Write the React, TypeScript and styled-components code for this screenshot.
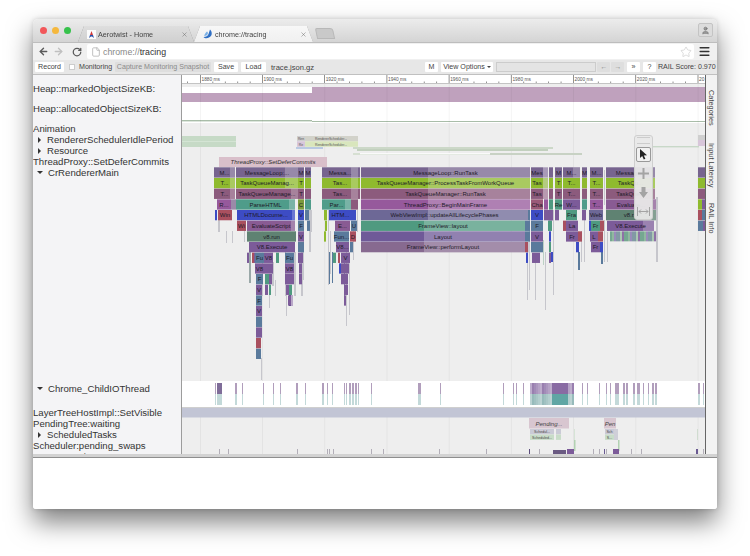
import React from "react";
import styled, { createGlobalStyle } from "styled-components";
import { ArrowLeft, ArrowRight, RotateCw, Star, Menu, File, User, X } from "lucide-react";

const Global = createGlobalStyle`
  html, body { margin: 0; padding: 0; background: #fff; }
  body { font-family: "Liberation Sans", Arial, sans-serif; color: #222; }
`;

const Page = styled.div`
  width: 750px; height: 556px; padding: 19px 0 0 33px; box-sizing: border-box; overflow: hidden;
`;
const Window = styled.div`
  width: 684px; height: 490px; border-radius: 5px 5px 3px 3px; background: #fff; overflow: hidden;
  box-shadow: 0 13px 26px rgba(0,0,0,.5), 0 0 5px rgba(0,0,0,.16);
  display: flex; flex-direction: column;
`;
const Soft = styled.div`
  filter: blur(.45px); display: flex; flex-direction: column; flex: 1; min-height: 0;
`;
const TabStrip = styled.div`
  height: 23px; display: flex; align-items: flex-end; flex: none; position: relative;
  background: linear-gradient(#ececec, #d4d4d4); padding-left: 7px;
`;
const Lights = styled.div`
  display: flex; gap: 5px; align-self: flex-start; margin-top: 8px; width: 38px; flex: none;
`;
const Light = styled.span<{ $c: string }>`
  width: 7px; height: 7px; border-radius: 50%; background: ${p => p.$c};
`;
const TabWrap = styled.div<{ $w: number; $active?: boolean }>`
  width: ${p => p.$w}px; height: 16px; flex: none; filter: drop-shadow(0 0 .6px #8a8a8a);
  & > div { background: ${p => p.$active ? "linear-gradient(#f7f7f7,#f0f0f0)" : "linear-gradient(#dedede,#d0d0d0)"}; }
`;
const TabBody = styled.div`
  height: 100%; display: flex; align-items: center; padding: 0 6px 0 9px; gap: 2px; font-size: 7.2px; color: #444;
  clip-path: polygon(6px 0, calc(100% - 6px) 0, 100% 100%, 0 100%);
`;
const TabTitle = styled.span` flex: 1; white-space: nowrap; `;
const NewTab = styled.div`
  width: 16px; height: 9px; margin: 0 0 3px 3px; background: #c9c9c9; border: 1px solid #b8b8b8; border-radius: 2px 3px 0 0; transform: skewX(12deg);
`;
const Profile = styled.div`
  position: absolute; right: 4px; top: 4px; width: 15px; height: 14px; border: 1px solid #c4c4c4; border-radius: 2px;
  display: flex; align-items: center; justify-content: center; box-sizing: border-box; background: #dcdcdc;
`;
const AddressBar = styled.div`
  height: 18px; flex: none; display: flex; align-items: center; background: #f0f0f0; border-top: 1px solid #bdbdbd;
  box-sizing: border-box; padding-left: 4px;
`;
const NavIcon = styled.span<{ $w: number }>`
  width: ${p => p.$w}px; display: flex; justify-content: center; align-items: center; flex: none;
`;
const Omnibox = styled.div`
  width: 607px; height: 15px; margin-left: 1px; background: #fff; border-radius: 2px; display: flex; align-items: center;
  padding: 0 2px 0 4px; box-sizing: border-box; font-size: 8.8px; color: #888; flex: none;
`;
const Url = styled.span` margin-left: 2px; flex: 1; b { font-weight: 400; color: #333; } `;
const Burger = styled.span` margin-left: 4px; display: flex; `;
const Toolbar = styled.div`
  height: 15px; flex: none; display: flex; align-items: center; background: #e7e7e7; padding-left: 2px;
  font-size: 7.1px; color: #444; border-bottom: 1px solid #c0c0c0; box-sizing: border-box;
`;
const Btn = styled.div<{ $w: number; $ml?: number; $muted?: boolean }>`
  width: ${p => p.$w}px; margin-left: ${p => p.$ml ?? 0}px; height: 10px; flex: none; display: flex; align-items: center; justify-content: center;
  background: ${p => p.$muted ? "#dedede" : "#fff"}; color: ${p => p.$muted ? "#8a8a8a" : "#444"}; border-radius: 1px; white-space: nowrap;
`;
const Check = styled.span`
  width: 6px; height: 6px; margin-left: 5px; background: #fff; border: 1px solid #ccc; flex: none; box-sizing: border-box;
`;
const Plain = styled.span<{ $ml: number; $w: number; $size?: number }>`
  margin-left: ${p => p.$ml}px; width: ${p => p.$w}px; flex: none; white-space: nowrap; font-size: ${p => p.$size ?? 7.1}px;
`;
const Caret = styled.i`
  display: inline-block; border: 2px solid transparent; border-top-color: #444; border-bottom: 0; margin-left: 2px;
`;
const SearchInput = styled.div`
  width: 100px; height: 10px; margin-left: 3px; background: #e4e4e4; border: 1px solid #ccc; box-sizing: border-box; flex: none;
`;
const Content = styled.div` height: 379px; display: flex; flex: none; overflow: hidden; `;
const Labels = styled.div`
  width: 149px; flex: none; background: #f4f4f6; border-right: 1px solid #9c9c9c; box-sizing: border-box; padding-top: 8px;
  overflow: hidden; display: flex; flex-direction: column; font-size: 9.6px; line-height: 11px; color: #333;
`;
const Label = styled.div<{ $gap?: number; $indent?: number }>`
  height: 11px; flex: none; white-space: nowrap; margin-top: ${p => p.$gap ?? 0}px; padding-left: ${p => p.$indent ?? 0}px;
  display: flex; align-items: center;
`;
const Tri = styled.i<{ $open?: boolean }>`
  display: inline-block; width: 0; height: 0; margin-right: ${p => p.$open ? 5 : 6}px; flex: none;
  ${p => p.$open
    ? "border-left:3px solid transparent;border-right:3px solid transparent;border-top:3px solid #333;margin-left:0;"
    : "border-top:3px solid transparent;border-bottom:3px solid transparent;border-left:3px solid #333;margin-left:2px;"}
`;
const Chart = styled.div` width: 523px; flex: none; position: relative; background: #eee; svg { display: block; } `;
const Side = styled.div`
  width: 12px; flex: none; background: #f2f2f2; border-left: 1px solid #666; box-sizing: border-box; display: flex; flex-direction: column;
  align-items: center; font-size: 7.4px; color: #444; padding-top: 15px;
`;
const SideTab = styled.div<{ $h: number }>`
  height: ${p => p.$h}px; writing-mode: vertical-rl; white-space: nowrap; flex: none;
`;
const Palette = styled.div`
  position: absolute; left: 452px; top: 60px; width: 19px; height: 85px; background: rgba(232,232,232,.93); border: 1px solid #cfcfcf;
  border-radius: 3px; box-sizing: border-box; display: flex; flex-direction: column; align-items: center;
`;
const Grip = styled.div`
  width: 13px; height: 5px; margin-top: 1px; border-top: 1px solid #ccc; border-bottom: 1px solid #ccc; flex: none;
`;
const Tool = styled.div<{ $on?: boolean }>`
  width: 15px; height: 15px; margin-top: ${p => p.$on ? 3 : 4}px; flex: none; display: flex; align-items: center; justify-content: center; border-radius: 2px; box-sizing: border-box;
  ${p => p.$on ? "border:1px solid #999;background:#f1f1f1;" : ""}
`;
const Divider = styled.div`
  height: 4px; flex: none; background: #d2d2d2; border-bottom: 1px solid #8e8e8e; box-sizing: border-box;
`;
const Bottom = styled.div` flex: 1; background: #fff; `;

const P = "#77648f", G = "#8fba2e", Mr = "#8c5b7d", Tl = "#4f9c8a", Pu = "#96599c", Bl = "#3d4cc4", Rd = "#a9505f",
  Ev = "#895b93", Run = "#5f8272", V8 = "#7c5b99", Sl = "#5a7a9c", Wv = "#6d6896", Lay = "#6f5a98", Pf = "#876a90", Fv = "#4f9a80";

type B = [number, number, number, string, string?, number?];
const blocks: B[] = [
  [214,21,0,P,"M...",230],[236,62,0,P,"MessageLoop:...",285],[298,6,0,P,"M"],[305,6,0,P,"M"],
  [214,21,1,G,"T...",230],[236,62,1,G,"TaskQueueManag...",285],[298,6,1,G,"T"],[305,6,1,G],
  [214,21,2,Mr,"T...",230],[236,62,2,Mr,"TaskQueueManage...",291],[298,6,2,Mr,"T"],[305,6,2,Mr],
  [217,14,3,Pu,"R..."],[231,5,3,"#9a8aa8"],[236,59,3,Tl,"ParseHTML",289],[298,6,3,"#7c9a3c","C"],[305,6,3,Tl],
  [215,2,4,Bl],[218,14,4,Rd,"Win"],[237,58,4,Bl,"HTMLDocume...",292],[298,6,4,Bl,"V"],[305,4,4,Sl],
  [237,9,5,Rd,"Wi"],[247,48,5,Ev,"EvaluateScript",291],[298,6,5,Sl,"F"],[307,3,5,Sl],
  [247,49,6,Run,"v8.run"],[298,6,6,V8,"V"],
  [249,46,7,V8,"V8.Execute"],[298,6,7,Sl],
  [247,2,8,V8],[252,2,8,Rd],[254,1,8,V8],[255,9,8,Sl,"Fu"],[264,9,8,V8,"V8"],[276,3,8,Fv],[285,9,8,Sl,"Fu"],[298,5,8,V8],
  [255,9,9,V8,"V8"],[264,9,9,V8],[285,9,9,V8,"V8"],[299,3,9,V8],
  [256,7,10,Sl,"F"],[265,4,10,Fv],[269,3,10,V8],[285,9,10,V8],[299,3,10,V8],
  [256,6,11,V8,"V"],[265,3,11,V8],[269,2,11,Fv],[286,3,11,V8],[289,3,11,Fv],
  [256,6,12,Sl,"F"],[288,3,12,V8],
  [256,6,13,V8,"V"],
  [256,6,14,Sl],[256,6,15,V8],[256,5,16,Rd],[256,5,17,Sl],

  [322,36,0,P,"Messa...",351],[358,2,0,P],[322,36,1,G,"Tas...",351],[358,2,1,G],[322,36,2,Mr,"Tas...",351],[358,2,2,Mr],
  [322,29,3,Tl,"Par...",345],[351,7,3,Mr],
  [324,3,4,G],[329,23,4,Bl,"HTM..."],[352,4,4,Bl],
  [325,2,5,G],[335,15,5,Ev,"E..."],[351,6,5,Sl,"U"],
  [324,2,6,G],[334,15,6,Sl,"Fun..."],[350,6,6,Rd,"D"],
  [336,13,7,V8,"V8..."],[350,3,7,Sl],
  [333,3,8,Fv],[338,2,8,Rd],[341,9,8,V8,"V"],
  [339,2,9,Bl],[341,8,9,V8],[341,7,10,V8],[344,4,11,V8],[344,2,12,V8],

  [361,169,0,P,"MessageLoop::RunTask",428],
  [361,169,1,G,"TaskQueueManager::ProcessTaskFromWorkQueue",428],
  [361,169,2,Mr,"TaskQueueManager::RunTask",428],
  [361,169,3,Pu,"ThreadProxy::BeginMainFrame",428],
  [361,167,4,Wv,"WebViewImpl::updateAllLifecyclePhases",428],[528,2,4,Sl],
  [361,164,5,Fv,"FrameView::layout",424],[525,5,5,Sl],
  [361,164,6,Lay,"Layout",424],[525,5,6,Sl],
  [361,164,7,Pf,"FrameView::performLayout",424],[525,3,7,Rd],[528,2,7,"#c8c8d0"],
  [526,2,8,Bl],

  [531,12,0,P,"Mes"],[543,5,0,"#a89ab8"],[549,4,0,P],[531,12,1,G,"Tas"],[543,5,1,"#b4cc80"],[549,4,1,G],[531,12,2,Mr,"Tas"],[543,5,2,"#b89ab0"],[549,4,2,Mr],
  [531,12,3,"#9a5a78","Cha"],[544,4,3,Pu],[549,4,3,Fv],
  [531,12,4,Bl,"V"],[544,9,4,V8],[549,3,4,Sl],[531,12,5,Sl,"F"],[548,4,5,Fv],[531,12,6,V8,"V"],[549,2,6,Bl],[531,12,7,Sl],[549,2,7,Fv],[532,8,8,V8],[549,2,8,V8],
  [555,7,0,P,"M"],[563,17,0,P,"M...",573],[582,5,0,P,"M"],[590,13,0,P,"M..."],
  [555,7,1,G,"T"],[563,17,1,G,"T..."],[582,5,1,G],[590,13,1,G,"T..."],
  [555,7,2,Mr,"T"],[563,17,2,Mr,"T..."],[582,5,2,Mr],[590,13,2,Mr,"T..."],
  [555,7,3,Fv,"Re"],[563,17,3,V8,"W..."],[582,5,3,Tl],[590,13,3,Pu,"T..."],
  [548,5,4,V8],[555,4,4,V8],[566,11,4,Fv,"Fra"],[582,4,4,V8],[589,14,4,Wv,"Web"],
  [563,3,5,Rd],[566,12,5,V8,"La"],[589,2,5,Bl],[591,9,5,Fv,"Fr"],[600,4,5,Rd],
  [566,12,6,V8,"Fr"],[578,4,6,Rd],[590,8,6,V8,"L"],[598,5,6,Rd],
  [576,3,7,Bl],[591,9,7,V8,"Fr"],[600,3,7,Bl],
  [606,49,0,P,"Message...",636],[606,49,1,G,"TaskQu...",636],[606,49,2,Mr,"TaskQue...",636],[606,50,3,Ev,"Evaluate...",636],
  [606,50,4,Run,"v8.r...",640],[607,47,5,V8,"V8.Execute",643],
  [698,7,0,P],[698,7,1,G],[698,7,2,Mr],[698,4,3,G],[702,3,3,V8],[698,4,4,Rd],[702,3,4,Sl],[698,5,5,Sl],[703,2,5,V8],
];

type T = [number, number, number, string, number?];
const L = "#c6c6cc", LG = "#bcd0c4", LP = "#b9a8c8";
const thin: T[] = [
  [218,210,232,L,2],[226,231,243,L,1],[232,231,243,L,1],[244,231,242,L,1],[249,252,283,"#9aa8a8",2],[262,262,296,L,1],
  [272,262,286,L,2],[275,280,296,L,1],[269,284,308,L,1],[261,358,380,L,1],[285,252,296,L,1],[294,252,296,L,2],[286,295,316,L,1],
  [289,295,306,"#4a3f80",2],[291,295,306,LP,2],[301,252,296,L,2],[303,231,280,L,1],[309,209,252,L,2],[311,210,232,L,1],
  [328,210,285,L,1],[330,231,274,L,1],[329,252,284,Sl,1],[332,252,283,Sl,1],[344,263,300,"#9088b0",1],[346,252,326,L,1],[349,252,315,L,1],[353,231,260,L,1],
  [357,210,232,L,1],[527,252,300,L,1],[529,220,290,L,1],[543,240,265,LG,1],[545,252,310,L,1],[535,262,300,L,1],[551,252,262,Bl,2],[553,210,295,L,1],
  [578,252,270,Sl,2],[581,231,262,L,1],[584,220,262,L,1],[601,252,264,Sl,2],[604,220,262,L,1],[604,170,205,L,1],[607,232,262,L,1],[656,197,262,L,2],
];
const stripeColors = ["#5f9a80", "#7c5b99", "#9fc0a8", "#6f8a98", "#8a7ab0", "#7fae90"];
const io: [number, number][] = [[215,1],[217,5],[235,2],[242,1],[263,1],[273,1],[280,1],[296,2],[305,1],[322,2],[327,1],[332,1],[344,1],[346,1],[349,2],[352,2],[355,2],[358,1],[371,1],[418,2],[420,1],[440,1],[503,1],[513,1],[516,1],[523,1],[582,1],[587,1],[599,1],[606,1],[610,1],[615,4],[623,2],[626,2],[633,2],[637,3],[643,1],[648,1],[652,2],[655,2],[698,2],[703,1]];
const ticks = [219,228,297,327,329,333,371,383,439,486,529,539,593,599,604,606,631,641,696,703];
const Major = [200,262,324.2,386.5,448.7,510.9,573,635.3,697.6];
const RulerNames = ["1880 ms","1900 ms","1920 ms","1940 ms","1960 ms","1980 ms","2000 ms","2020 ms","20"];

const rowY = (r: number) => 167.3 + r * 10.67;

function Timeline() {
  const dense: React.ReactNode[] = [];
  for (let x = 530; x < 574; x += 2) {
    const strong = x > 551 && x < 567;
    const o = strong ? 0.9 : 0.5 + ((x * 7) % 5) * 0.07;
    dense.push(<rect key={"t" + x} x={x} y={383} width={2} height={11} fill="#7c5b99" opacity={o} />);
    dense.push(<rect key={"b" + x} x={x} y={394} width={2} height={11} fill={strong ? "#4f9c9a" : "#7aa8a8"} opacity={o} />);
  }
  const stripes: React.ReactNode[] = [];
  for (let i = 0; i < 23; i++) {
    stripes.push(<rect key={i} x={610 + i * 2} y={rowY(6)} width={2} height={10} fill={stripeColors[(i * 5 + (i >> 2)) % 6]} opacity=".85" />);
  }
  return (
    <svg width="523" height="379" viewBox="182 75 523 379" fontFamily="'Liberation Sans', Arial, sans-serif">
      <rect x="182" y="75" width="523" height="379" fill="#eeeeee" />
      {/* ruler */}
      <rect x="182" y="75" width="523" height="8" fill="#fff" />
      <rect x="182" y="83" width="523" height="1" fill="#c4c4c4" />
      {Major.map((m, i) => (
        <g key={m}>
          <rect x={m} y="75" width=".8" height="8" fill="#777" />
          <text x={m + 1.5} y="80.5" fontSize="4.8" fill="#555">{RulerNames[i]}</text>
          {i < 8 && [1, 2, 3, 4].map(k => <rect key={k} x={m + k * 12.44} y="81.5" width=".8" height="1.5" fill="#777" />)}
        </g>
      ))}
      <rect x="187" y="81.5" width=".8" height="1.5" fill="#777" />
      {/* heap counters */}
      <rect x="182" y="87" width="523" height="36" fill="#fff" />
      <rect x="182" y="93" width="130" height="9" fill="#bfa1bd" />
      <rect x="312" y="87" width="393" height="15" fill="#bfa1bd" />
      <rect x="182" y="120" width="130" height="1.4" fill="#a9bda9" />
      <rect x="312" y="121" width="393" height="1" fill="#a9bda9" />
      {/* grid lines */}
      {Major.map(m => <rect key={m} x={m} y="84" width="1" height="370" fill="#000" opacity=".045" />)}
      {/* async tracks */}
      <rect x="182" y="136" width="54" height="11" fill="#c6dac6" />
      <rect x="182" y="141" width="54" height=".8" fill="#d8e6d8" />
      <rect x="297" y="136" width="8" height="5.3" fill="#cfcfcf" />
      <rect x="305" y="136" width="53" height="5.3" fill="#d2d2ca" />
      <rect x="297" y="141.3" width="8" height="5.5" fill="#d8c6da" />
      <rect x="305" y="141.3" width="53" height="5.5" fill="#d9e6bd" />
      <text x="301" y="140.4" fontSize="3.4" textAnchor="middle" fill="#555">Ren</text>
      <text x="331" y="140.4" fontSize="3.4" textAnchor="middle" fill="#555">RendererScheduler...</text>
      <text x="301" y="145.8" fontSize="3.4" textAnchor="middle" fill="#555">Re</text>
      <text x="331" y="145.8" fontSize="3.4" textAnchor="middle" fill="#555">RendererScheduler...</text>
      <rect x="296" y="147" width="27" height="2" fill="#b9c9e2" />
      <rect x="353" y="147" width="200" height="2" fill="#ccd8c8" />
      <rect x="357" y="149" width="191" height="2" fill="#c2d0be" />
      <rect x="353" y="153" width="210" height="2" fill="#d6dfd2" />
      <rect x="360" y="153" width="130" height="1.4" fill="#fafafa" />
      <rect x="490" y="153" width="92" height="2" fill="#c8d2c4" />
      <rect x="653" y="146" width="46" height="1.4" fill="#c8d8c8" />
      <rect x="698" y="135" width="7" height="5" fill="#cfcfcf" />
      <rect x="698" y="140" width="7" height="6" fill="#d8c6da" />
      {/* ThreadProxy */}
      <rect x="219" y="157" width="108" height="10" fill="#d9bfca" />
      <text x="273" y="164.3" fontSize="6" fontStyle="italic" textAnchor="middle" fill="#333">ThreadProxy::SetDeferCommits</text>
      {/* stalactites */}
      {thin.map(([x, a, b, c, w], i) => <rect key={i} x={x} y={a} width={w ?? 1} height={b - a} fill={c} />)}
      {/* main thread */}
      {blocks.map(([x, w, r, c, label, light], i) => (
        <g key={i}>
          <rect x={x} y={rowY(r)} width={w} height={10.3} fill={c} />
          {light !== undefined && <rect x={light} y={rowY(r)} width={x + w - light} height={10.3} fill="#fff" opacity=".24" />}
          {label && <text x={x + w / 2} y={rowY(r) + 7.2} fontSize="6" textAnchor="middle" fill="#1e1a28">{label}</text>}
        </g>
      ))}
      {stripes}
      {/* IO thread */}
      <rect x="182" y="381" width="523" height="26" fill="#fff" />
      {io.map(([x, w], i) => (
        <g key={i}>
          <rect x={x} y="383" width={w} height="11" fill={w === 5 ? "#5f4880" : "#9d86ab"} opacity=".8" />
          <rect x={x} y="394" width={w} height="11" fill="#a9c9c9" opacity=".7" />
        </g>
      ))}
      {dense}
      {/* compositor tracks */}
      <rect x="182" y="407" width="523" height="1" fill="#cfcfcf" />
      <rect x="182" y="408" width="523" height="9.5" fill="#c2c5d5" />
      <rect x="529" y="418" width="40" height="10.5" fill="#d8c6d0" />
      <text x="549" y="425.5" fontSize="6" fontStyle="italic" textAnchor="middle" fill="#444">Pending...</text>
      <rect x="604" y="418" width="12" height="10.5" fill="#d8c6d0" />
      <text x="610" y="425.5" fontSize="6" fontStyle="italic" textAnchor="middle" fill="#444">Pen</text>
      <rect x="530" y="429" width="24" height="5.4" fill="#cacad6" />
      <text x="542" y="433.2" fontSize="3.6" textAnchor="middle" fill="#444">Schedul...</text>
      <rect x="530" y="434.5" width="24" height="5.4" fill="#c8dcc8" />
      <text x="542" y="438.7" fontSize="3.6" textAnchor="middle" fill="#444">Scheduled...</text>
      <rect x="556" y="429" width="5" height="5.4" fill="#cacad6" />
      <rect x="556" y="434.5" width="5" height="5.4" fill="#c8dcc8" />
      <rect x="605" y="429" width="9" height="5.4" fill="#cacad6" />
      <text x="609.5" y="433.2" fontSize="3.6" textAnchor="middle" fill="#444">Sch</text>
      <rect x="605" y="434.5" width="9" height="5.4" fill="#c8dcc8" />
      <text x="609.5" y="438.7" fontSize="3.6" textAnchor="middle" fill="#444">S...</text>
      <rect x="614" y="429" width="4" height="11" fill="#cfcfd8" />
      <rect x="574" y="429" width="1" height="11" fill="#d6e4d6" />
      <rect x="697" y="429" width="1" height="11" fill="#d0dcd0" />
      <rect x="574" y="440" width="1.5" height="11" fill="#b2d2b2" />
      <rect x="618" y="440" width="1.5" height="11" fill="#b2d2b2" />
      {ticks.map(x => <rect key={x} x={x} y="449" width="1" height="5" fill="#b2aeb8" />)}
      <rect x="529" y="449" width="1" height="5" fill="#5b4c7c" />
      <rect x="553" y="450" width="13" height="4" fill="#6a5a82" />
      <rect x="567" y="449" width="7" height="5" fill="#7c5b99" />
      <rect x="604" y="449" width="1" height="5" fill="#6a5a92" />
      <rect x="613" y="449" width="6" height="5" fill="#7c5b99" />
      <rect x="696" y="449" width="2" height="5" fill="#6a5a92" />
    </svg>
  );
}

const Favicon1 = () => (
  <svg width="9" height="9" viewBox="0 0 9 9" style={{ flex: "none" }}>
    <rect width="9" height="9" fill="#fbfbfb" />
    <path d="M4.5 1 L6 5 L3 5 Z" fill="#d23a3a" />
    <path d="M3 5 L6 5 L7 8 L5 6.5 L4 6.5 L2 8 Z" fill="#2a4fa8" />
  </svg>
);
const Favicon2 = () => (
  <svg width="10" height="10" viewBox="0 0 10 10" style={{ flex: "none" }}>
    <path d="M7 0.5 C9.5 3 9.5 7 6 8.5 C4 9.6 1.5 9.4 0.5 8 C3 8 5 7 5.5 5 C6 3.5 6.5 2 7 0.5 Z" fill="#2f6fc4" />
    <path d="M4 2.5 C5 3 5.2 4.5 4.5 5.5 C3.5 6.8 2 7 1 6.5 C2 5 2.8 3.5 4 2.5 Z" fill="#7ab0e6" />
  </svg>
);

export default function App() {
  return (
    <>
      <Global />
      <Page>
        <Window>
          <Soft>
            <TabStrip>
              <Lights>
                <Light $c="#f2575a" />
                <Light $c="#f5b83d" />
                <Light $c="#36c24b" />
              </Lights>
              <TabWrap $w={116}>
                <TabBody>
                  <Favicon1 />
                  <TabTitle>Aerotwist - Home</TabTitle>
                  <X size={7} color="#666" strokeWidth={1.6} />
                </TabBody>
              </TabWrap>
              <TabWrap $w={119} $active>
                <TabBody>
                  <Favicon2 />
                  <TabTitle>chrome://tracing</TabTitle>
                  <X size={7} color="#666" strokeWidth={1.6} />
                </TabBody>
              </TabWrap>
              <NewTab />
              <Profile><User size={9} color="#777" fill="#999" /></Profile>
            </TabStrip>
            <AddressBar>
              <NavIcon $w={12}><ArrowLeft size={11} color="#5a5a5a" strokeWidth={3} /></NavIcon>
              <NavIcon $w={19}><ArrowRight size={11} color="#c0c0c0" strokeWidth={3} /></NavIcon>
              <NavIcon $w={18}><RotateCw size={10} color="#5a5a5a" strokeWidth={3} /></NavIcon>
              <Omnibox>
                <File size={10} color="#b5b5b5" />
                <Url>chrome://<b>tracing</b></Url>
                <Star size={12} color="#c4c4c4" strokeWidth={1.2} />
              </Omnibox>
              <Burger><Menu size={13} color="#333" strokeWidth={2.6} /></Burger>
            </AddressBar>
            <Toolbar>
              <Btn $w={29}>Record</Btn>
              <Check />
              <Plain $ml={4} $w={36}>Monitoring</Plain>
              <Btn $w={96} $muted>Capture Monitoring Snapshot</Btn>
              <Btn $w={24} $ml={3}>Save</Btn>
              <Btn $w={25} $ml={3}>Load</Btn>
              <Plain $ml={5} $w={154} $size={7.6}>trace.json.gz</Plain>
              <Btn $w={13}>M</Btn>
              <Btn $w={52} $ml={3}>View Options<Caret /></Btn>
              <SearchInput />
              <Btn $w={13} $ml={1} $muted>←</Btn>
              <Btn $w={13} $ml={1} $muted>→</Btn>
              <Btn $w={13} $ml={3}>»</Btn>
              <Btn $w={13} $ml={3}>?</Btn>
              <Plain $ml={2} $w={58} $size={7.1}>RAIL Score: 0.970</Plain>
            </Toolbar>
            <Content>
              <Labels>
                <Label>Heap::markedObjectSizeKB:</Label>
                <Label $gap={9}>Heap::allocatedObjectSizeKB:</Label>
                <Label $gap={9}>Animation</Label>
                <Label $indent={3}><Tri />RendererSchedulerIdlePeriod</Label>
                <Label $indent={3}><Tri />Resource</Label>
                <Label>ThreadProxy::SetDeferCommits</Label>
                <Label $indent={4}><Tri $open />CrRendererMain</Label>
                <Label $gap={205} $indent={4}><Tri $open />Chrome_ChildIOThread</Label>
                <Label $gap={13}>LayerTreeHostImpl::SetVisible</Label>
                <Label>PendingTree:waiting</Label>
                <Label $indent={3}><Tri />ScheduledTasks</Label>
                <Label>Scheduler:pending_swaps</Label>
                <Label $indent={4}><Tri $open />Compositor</Label>
              </Labels>
              <Chart>
                <Timeline />
                <Palette>
                  <Grip />
                  <Tool $on>
                    <svg width="9" height="11" viewBox="0 0 9 11"><path d="M1 0 L1 9 L3.2 7 L4.8 10.5 L6.4 9.8 L4.8 6.5 L8 6.3 Z" fill="#222" /></svg>
                  </Tool>
                  <Tool>
                    <svg width="11" height="11" viewBox="0 0 11 11"><path d="M4.5 0 H6.5 V4.5 H11 V6.5 H6.5 V11 H4.5 V6.5 H0 V4.5 H4.5 Z" fill="#a4a4a4" /></svg>
                  </Tool>
                  <Tool>
                    <svg width="9" height="11" viewBox="0 0 9 11"><path d="M2.5 0 H6.5 V5 H9 L4.5 11 L0 5 H2.5 Z" fill="#a4a4a4" /></svg>
                  </Tool>
                  <Tool>
                    <svg width="13" height="9" viewBox="0 0 13 9"><path d="M.5 0 V9 M12.5 0 V9 M2 4.5 H11 M4 2.5 L2 4.5 L4 6.5 M9 2.5 L11 4.5 L9 6.5" stroke="#a4a4a4" fill="none" /></svg>
                  </Tool>
                </Palette>
              </Chart>
              <Side>
                <SideTab $h={53}>Categories</SideTab>
                <SideTab $h={60}>Input Latency</SideTab>
                <SideTab $h={40}>RAIL Info</SideTab>
              </Side>
            </Content>
            <Divider />
            <Bottom />
          </Soft>
        </Window>
      </Page>
    </>
  );
}
